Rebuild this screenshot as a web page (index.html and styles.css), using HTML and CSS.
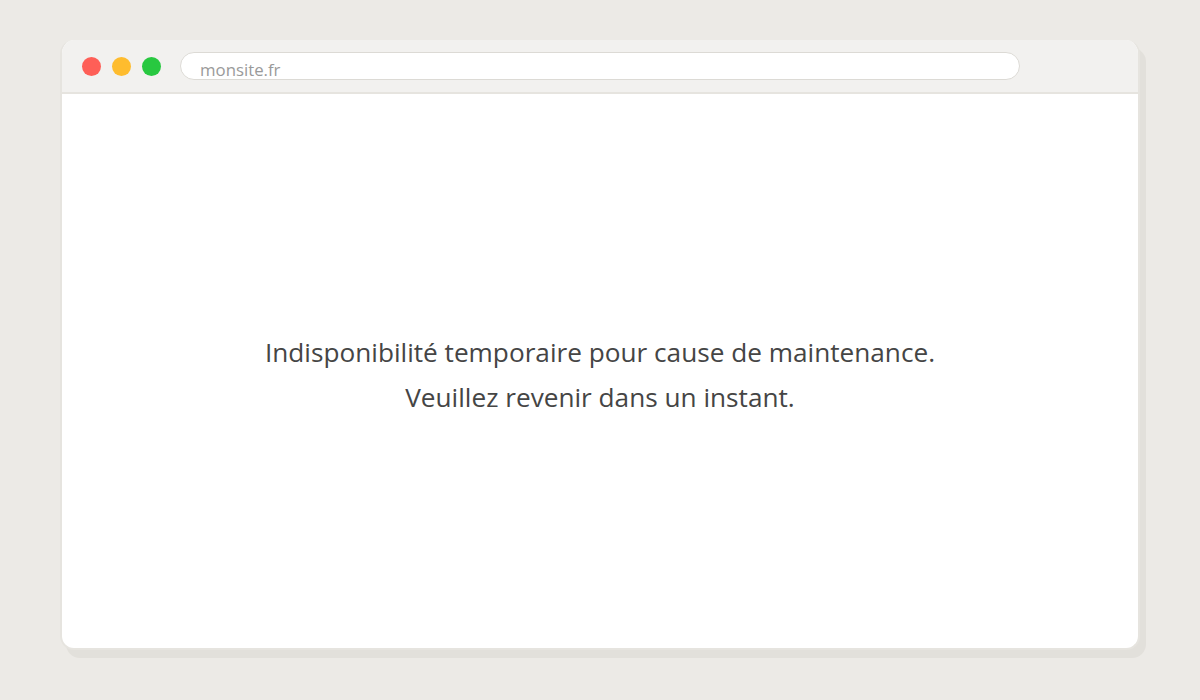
FILE: index.html
```html
<!DOCTYPE html>
<html lang="fr">
<head>
  <meta charset="UTF-8" />
  <title>Maintenance</title>
  <link rel="stylesheet" href="styles.css">
</head>
<body>
  <div class="browser">
    <div class="browser-bar">
      <div class="dots">
        <span class="dot red"></span>
        <span class="dot yellow"></span>
        <span class="dot green"></span>
      </div>
      <div class="address">monsite.fr</div>
    </div>
    <main class="browser-page">
      <p>Indisponibilité temporaire pour cause de maintenance.<br>Veuillez revenir dans un instant.</p>
    </main>
  </div>
</body>
</html>
```

FILE: styles.css
```css
html, body {
  height: 100%;
}
body {
  margin: 0;
  padding: 40px 60px;
  box-sizing: border-box;
  background-color: #eceae6;
  font-family: 'Open Sans', 'Noto Sans', sans-serif;
}
.browser {
  width: 1080px;
  height: 610px;
  box-sizing: border-box;
  display: flex;
  flex-direction: column;
  border: 2px solid #e6e4df;
  border-top: none;
  border-radius: 14px;
  background-color: #ffffff;
  box-shadow: 6px 8px 0 #e2e0db;
  overflow: hidden;
}
.browser-bar {
  height: 52px;
  flex: none;
  display: flex;
  align-items: center;
  background-color: #f2f1ef;
  border-bottom: 2px solid #e6e4df;
  margin: 0 -2px;
  padding: 0 0 0 22px;
}
.dots {
  display: flex;
  gap: 11px;
}
.dot {
  width: 19px;
  height: 19px;
  border-radius: 50%;
}
.dot.red { background-color: #fe5f57; }
.dot.yellow { background-color: #febc2e; }
.dot.green { background-color: #28c840; }
.address {
  margin-left: 19px;
  width: 840px;
  height: 28px;
  box-sizing: border-box;
  border: 1px solid #dcdad5;
  border-radius: 14px;
  background-color: #ffffff;
  padding: 5px 0 0 19px;
  font-size: 16.8px;
  line-height: 24px;
  color: #9a9a9a;
}
.browser-page {
  flex: 1;
  display: flex;
  align-items: center;
  justify-content: center;
  padding-top: 8px;
}
.browser-page p {
  margin: 0;
  text-align: center;
  font-size: 26.2px;
  line-height: 45px;
  color: #454545;
}
```
